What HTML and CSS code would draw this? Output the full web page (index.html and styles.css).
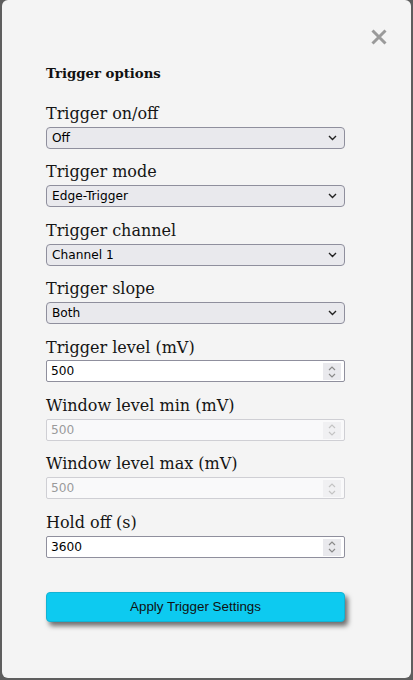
FILE: index.html
```html
<!DOCTYPE html>
<html lang="en">
<head>
<meta charset="utf-8">
<title>Trigger options</title>
<link rel="stylesheet" href="styles.css">
</head>
<body>
<div class="panel">
  <div class="close-row">
    <button class="close" aria-label="Close">
      <svg width="16" height="16" viewBox="0 0 16 16"><path d="M1.5 1.5 L14.5 14.5 M14.5 1.5 L1.5 14.5" stroke="#9a9a9a" stroke-width="3" fill="none"/></svg>
    </button>
  </div>
  <h5 class="title">Trigger options</h5>

  <div class="field">
    <label class="label">Trigger on/off</label>
    <div class="select-wrap">
      <select class="select"><option>Off</option></select>
      <svg class="chev" width="9" height="6" viewBox="0 0 9 6"><path d="M1 1 L4.5 4.5 L8 1" stroke="#222" stroke-width="1.4" fill="none"/></svg>
    </div>
  </div>

  <div class="field">
    <label class="label">Trigger mode</label>
    <div class="select-wrap">
      <select class="select"><option>Edge-Trigger</option></select>
      <svg class="chev" width="9" height="6" viewBox="0 0 9 6"><path d="M1 1 L4.5 4.5 L8 1" stroke="#222" stroke-width="1.4" fill="none"/></svg>
    </div>
  </div>

  <div class="field">
    <label class="label">Trigger channel</label>
    <div class="select-wrap">
      <select class="select"><option>Channel 1</option></select>
      <svg class="chev" width="9" height="6" viewBox="0 0 9 6"><path d="M1 1 L4.5 4.5 L8 1" stroke="#222" stroke-width="1.4" fill="none"/></svg>
    </div>
  </div>

  <div class="field">
    <label class="label">Trigger slope</label>
    <div class="select-wrap">
      <select class="select"><option>Both</option></select>
      <svg class="chev" width="9" height="6" viewBox="0 0 9 6"><path d="M1 1 L4.5 4.5 L8 1" stroke="#222" stroke-width="1.4" fill="none"/></svg>
    </div>
  </div>

  <div class="field">
    <label class="label">Trigger level (mV)</label>
    <div class="num-wrap">
      <input class="num" type="text" value="500">
      <span class="spin"><svg width="10" height="14" viewBox="0 0 10 14"><path d="M2 5 L5 2 L8 5 M2 9 L5 12 L8 9" stroke="#8a8a8a" stroke-width="1.2" fill="none"/></svg></span>
    </div>
  </div>

  <div class="field">
    <label class="label">Window level min (mV)</label>
    <div class="num-wrap">
      <input class="num" type="text" value="500" disabled>
      <span class="spin spin-off"><svg width="10" height="14" viewBox="0 0 10 14"><path d="M2 5 L5 2 L8 5 M2 9 L5 12 L8 9" stroke="#c4c4c4" stroke-width="1.2" fill="none"/></svg></span>
    </div>
  </div>

  <div class="field">
    <label class="label">Window level max (mV)</label>
    <div class="num-wrap">
      <input class="num" type="text" value="500" disabled>
      <span class="spin spin-off"><svg width="10" height="14" viewBox="0 0 10 14"><path d="M2 5 L5 2 L8 5 M2 9 L5 12 L8 9" stroke="#c4c4c4" stroke-width="1.2" fill="none"/></svg></span>
    </div>
  </div>

  <div class="field">
    <label class="label">Hold off (s)</label>
    <div class="num-wrap">
      <input class="num" type="text" value="3600">
      <span class="spin"><svg width="10" height="14" viewBox="0 0 10 14"><path d="M2 5 L5 2 L8 5 M2 9 L5 12 L8 9" stroke="#8a8a8a" stroke-width="1.2" fill="none"/></svg></span>
    </div>
  </div>

  <button class="apply">Apply Trigger Settings</button>
</div>
</body>
</html>
```

FILE: styles.css
```css
html, body {
  margin: 0;
  padding: 0;
  height: 100%;
}
body {
  background: #5e5e5e;
}
.panel {
  box-sizing: border-box;
  margin: 0 2px;
  height: 678px;
  background: #f4f4f4;
  border-radius: 6px;
  padding: 26px 66px 0 44px;
  display: flex;
  flex-direction: column;
  font-family: "DejaVu Serif", serif;
}
.close-row {
  display: flex;
  justify-content: flex-end;
  margin-right: -42px;
  height: 22px;
}
.close {
  border: 0;
  background: transparent;
  padding: 0;
  width: 16px;
  height: 16px;
  margin-top: 3px;
  display: flex;
}
.title {
  margin: 18px 0 22.5px;
  font-size: 13.28px;
  font-weight: bold;
  line-height: 15.5px;
  color: #111;
}
.field {
  display: flex;
  flex-direction: column;
  margin-bottom: 13.4px;
}
.label {
  font-size: 16px;
  line-height: 18.6px;
  color: #151515;
  padding-top: 1px;
  margin-bottom: 3.4px;
}
.select-wrap, .num-wrap {
  position: relative;
  height: 22px;
}
.select {
  -webkit-appearance: none;
  appearance: none;
  box-sizing: border-box;
  width: 100%;
  height: 22px;
  margin: 0;
  border: 1px solid #8f8f9d;
  border-radius: 4px;
  background: #e9e9ed;
  font-family: "DejaVu Sans", sans-serif;
  font-size: 12.2px;
  color: #000;
  padding: 0 20px 0 5px;
  outline: none;
}
.chev {
  position: absolute;
  right: 8px;
  top: 8px;
}
.num {
  box-sizing: border-box;
  width: 100%;
  height: 22px;
  margin: 0;
  border: 1px solid #8f8f9d;
  border-radius: 2px;
  background: #fff;
  font-family: "DejaVu Sans", sans-serif;
  font-size: 12.2px;
  color: #000;
  padding: 0 24px 0 4px;
  outline: none;
}
.num:disabled {
  background: #f9f9fa;
  border-color: #cfcfd4;
  color: #9a9a9a;
}
.spin {
  position: absolute;
  right: 4px;
  top: 3px;
  width: 18px;
  height: 17px;
  background: #e9e9ed;
  display: flex;
  align-items: center;
  justify-content: center;
}
.spin-off {
  background: #f0f0f2;
}
.apply {
  margin-top: 20.6px;
  height: 30px;
  width: 299px;
  box-sizing: border-box;
  background: #0dcaf0;
  border: 1px solid #12b3d4;
  border-radius: 4px;
  box-shadow: 3px 4px 5px rgba(0, 0, 0, 0.55);
  font-family: "Liberation Sans", "Open Sans", sans-serif;
  font-size: 13.4px;
  color: #111;
  padding: 0;
}
```
